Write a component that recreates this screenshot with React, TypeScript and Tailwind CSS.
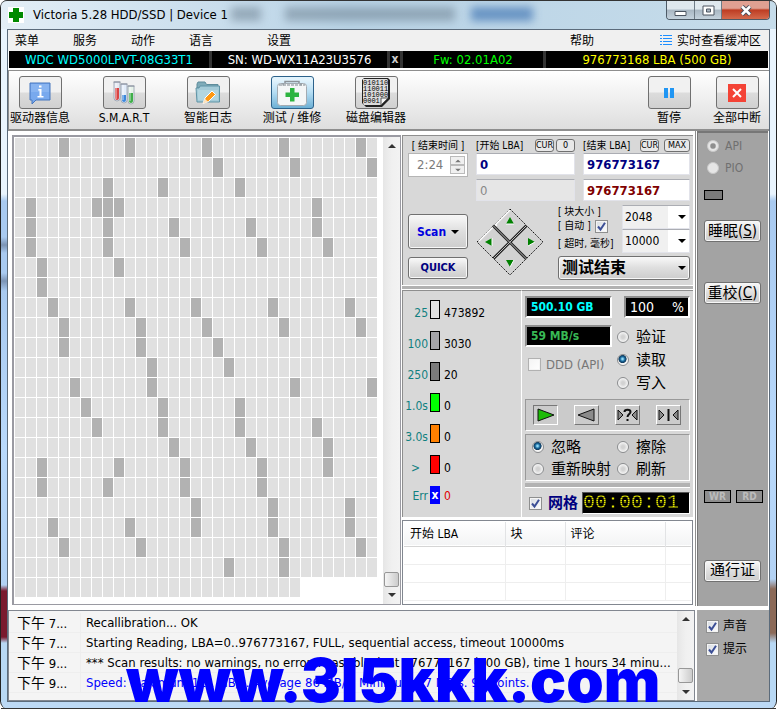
import type { ReactNode } from 'react'

const COLS = 33
const TOTAL_BLOCKS = 22 * COLS + 26

// slow blocks for every row of the surface map
const slowBlocks = [
  [4, 10, 17, 24, 31],
  [18, 25, 32],
  [8, 13, 20],
  [1, 7, 8, 9, 27],
  [1, 8, 14, 21, 27],
  [1, 8, 15, 22, 28],
  [2, 9],
  [2],
  [3, 10, 16, 23, 30],
  [4, 11, 17, 24, 31],
  [4, 11, 18],
  [12, 19],
  [5, 12, 25, 32],
  [6, 13, 20],
  [7, 13, 20, 27],
  [14, 21, 28],
  [2, 9, 15, 22, 28],
  [2, 8, 15, 22],
  [16, 23, 30],
  [3, 10, 16, 23, 30],
  [4, 11, 24, 31],
  [19, 24],
  [],
]

const legend = [
  { label: '25', color: 'bg-[#e0e0e0]', value: '473892' },
  { label: '100', color: 'bg-[#a4a4a8]', value: '3030' },
  { label: '250', color: 'bg-[#7b7b7b]', value: '20' },
  { label: '1.0s', color: 'bg-[#00ff00]', value: '0' },
  { label: '3.0s', color: 'bg-[#ff8000]', value: '0' },
  { label: '>', color: 'bg-[#ff0000]', value: '0' },
]

const logs = [
  { time: '7...', text: 'Recallibration... OK' },
  { time: '7...', text: 'Starting Reading, LBA=0..976773167, FULL, sequential access, timeout 10000ms' },
  { time: '9...', text: '*** Scan results: no warnings, no errors. Last block at 976773167 (500 GB), time 1 hours 34 minu...' },
  { time: '9...', text: 'Speed: Maximum 111 MB/s. Average 86 MB/s. Minimum 37 MB/s. 98 points.', blue: true },
]

const btn =
  'rounded-[3px] border border-[#707070] bg-linear-to-b from-[#f4f4f4] from-10% via-[#dedede] via-50% to-[#cdcdcd] shadow-[inset_0_0_0_1px_#f8f8f8]'

function Check({ label, children, checked = false, disabled = false, className = '' }: {
  label?: string
  children?: ReactNode
  checked?: boolean
  disabled?: boolean
  className?: string
}) {
  return (
    <label className={`flex items-center ${className}`}>
      <span className="relative block size-[13px] shrink-0">
        <input
          type="checkbox"
          aria-label={label}
          defaultChecked={checked}
          disabled={disabled}
          className="peer block size-[13px] appearance-none border border-[#8e8f8f] bg-linear-to-br from-[#d5dae0] to-white shadow-[inset_0_0_0_1px_#f4f4f4] disabled:border-[#b1b1b1] disabled:from-[#f4f4f4]"
        />
        <svg viewBox="0 0 13 13" className="pointer-events-none absolute inset-0 hidden size-[13px] peer-checked:block">
          <path d="M3 6.5 5.5 9.5 10 2.8" fill="none" stroke="#3c4f96" strokeWidth="2" />
        </svg>
      </span>
      {children}
    </label>
  )
}

function Radio({ name, children, checked = false, disabled = false, className = '' }: {
  name: string
  children: ReactNode
  checked?: boolean
  disabled?: boolean
  className?: string
}) {
  return (
    <label className={`flex items-center whitespace-nowrap ${className}`}>
      <input
        type="radio"
        name={name}
        defaultChecked={checked}
        disabled={disabled}
        className="size-[12px] shrink-0 appearance-none rounded-full border border-[#8a8c8e] bg-[radial-gradient(circle,#d2d2d2_20%,#f6f6f6_70%)] checked:bg-[radial-gradient(circle_at_45%_40%,#8fd8f5_8%,#17689c_28%,#123a5c_46%,#f4f4f4_54%)] disabled:border-[#c9c9c9] disabled:bg-none disabled:bg-[#e6e6e6] disabled:checked:bg-[radial-gradient(circle,#8f8f8f_30%,#e6e6e6_50%)]"
      />
      {children}
    </label>
  )
}

function Arrow({ up = false, className = '' }: { up?: boolean; className?: string }) {
  return (
    <svg viewBox="0 0 8 4" className={`h-1 w-2 ${className}`} aria-hidden="true">
      <path d={up ? 'M0 4 4 0 8 4z' : 'M0 0h8L4 4z'} fill="currentColor" />
    </svg>
  )
}

function Scrollbar() {
  return (
    <div className="flex w-[17px] shrink-0 flex-col items-center bg-linear-to-r from-[#e6e6e6] via-[#f0f0f0] to-[#f3f3f3] text-[#333]">
      <div className="flex h-[17px] items-center"><Arrow up /></div>
      <div className="flex-1" />
      <div className="h-[15px] w-[15px] rounded-[2px] border border-[#979797] bg-linear-to-r from-[#f5f5f5] to-[#cccccc]" />
      <div className="flex h-[17px] items-center"><Arrow /></div>
    </div>
  )
}

function ToolButton({ label, active = false, children }: { label: string; active?: boolean; children: ReactNode }) {
  return (
    <div className="flex w-[62px] flex-col items-center">
      <button
        aria-label={label}
        className={`flex h-[33px] w-[43px] items-center justify-center rounded-[3px] border ${
          active
            ? 'border-[#2c628b] bg-linear-to-b from-[#e2f3fc] from-10% via-[#b5ddf3] via-50% to-[#6cb0d5]'
            : 'border-[#707070] bg-linear-to-b from-[#f1f1f1] from-48% via-[#dcdcdc] via-52% to-[#d0d0d0]'
        }`}
      >
        {children}
      </button>
      <span className="mt-px h-4 whitespace-nowrap leading-4">{label}</span>
    </div>
  )
}

function InfoIcon() {
  return (
    <svg width="22" height="24" viewBox="0 0 22 24">
      <path d="M1 2h20v17H7l-4 4v-4H1z" fill="#78a9ee" stroke="#4777bd" />
      <path d="M2 3h18v8H2z" fill="#92bcf4" opacity=".6" />
      <path d="M9.500 8h3v7h2v1.500H8.500V15h2V9.500h-1.500zM10 4.500h2.500v2H10z" fill="#fff" />
    </svg>
  )
}

function TubesIcon() {
  return (
    <svg width="24" height="24" viewBox="0 0 24 24">
      <g stroke="#96a0ad" strokeWidth=".8">
        <path d="M2 1h6v16a3 3 0 0 1-6 0z" fill="#e7eaf3" />
        <path d="M9 3h6v16a3 3 0 0 1-6 0z" fill="#e3edfa" />
        <path d="M16 5h6v15a3 3 0 0 1-6 0z" fill="#e7f2e9" />
      </g>
      <path d="M3 7h4v10a2 2 0 0 1-4 0z" fill="#d94444" />
      <path d="M10 14h4v5a2 2 0 0 1-4 0z" fill="#3b87dc" />
      <path d="M17 12h4v8a2 2 0 0 1-4 0z" fill="#3fae49" />
      <path d="M4 2v16M11 4v15M18 6v14" stroke="#fff" strokeWidth="1" opacity=".7" />
      <path d="M1.500 1h7M8.500 3h7M15.500 5h7" stroke="#868c9b" />
    </svg>
  )
}

function FolderIcon() {
  return (
    <svg width="26" height="26" viewBox="0 0 26 26">
      <path d="M2 4 3 2h7l1.500 2.500H23V8H2z" fill="#7eabb9" stroke="#5e8c9b" />
      <path d="M1 8h3l1-2h19.500v16H2z" fill="#a4cbd8" stroke="#5f93a5" />
      <path d="M3 10h20v10H3z" fill="#b9dae4" opacity=".7" />
      <path d="m10 18 7-7 3.500 3.500-7 7-5.500 2z" fill="#ff9914" stroke="#fff" />
      <path d="m9.800 18.500-1.800 5 5-1.800z" fill="#fbe3c0" />
    </svg>
  )
}

function KitIcon() {
  return (
    <svg width="32" height="26" viewBox="0 0 32 26">
      <path d="M9 4V1.500h14V4" fill="none" stroke="#8c9298" strokeWidth="1.500" />
      <rect x="1.500" y="3.500" width="29" height="22" rx="3" fill="#f4f6f7" stroke="#a3abb2" />
      <path d="M3 5h26M7 3.500v2M25 3.500v2" stroke="#7d868d" strokeDasharray="3 1" />
      <path d="M14 8h4.500v4.500H23V17h-4.500v4.500H14V17H9.500v-4.500H14z" fill="#2db441" />
    </svg>
  )
}

function BinaryIcon() {
  return (
    <svg width="30" height="31" viewBox="0 0 30 31">
      <path d="M3 1h24l2 2v19l-8 8H5l-4-4V3z" fill="#222" />
      <path d="M2 2h24l1 1v18l-7 7H3l-1-2z" fill="#dcdcdc" />
      <path d="M27 21h-7v7z" fill="#f6f6f6" stroke="#555" />
      <g fontFamily="'Liberation Mono', monospace" fontSize="7" fill="#000">
        <text x="2" y="8">010110</text>
        <text x="2" y="14">110011</text>
        <text x="2" y="20">101000</text>
        <text x="2" y="26">0001</text>
      </g>
    </svg>
  )
}

function Diamond() {
  return (
    <svg width="68" height="68" viewBox="0 0 68 68" role="img" aria-label="方向">
      <path d="M34 1 67 34 34 67 1 34z" fill="#d2d2d2" stroke="#111" strokeDasharray="1.500 1" />
      <path d="M3 33 34 2M19 48l31-31M19 18l2-1M34 36l16 15" stroke="#fff" strokeWidth="1.500" fill="none" />
      <path d="M17 17.500 50.500 51M17.500 50.500l33-33" stroke="#222" strokeWidth="3" />
      <path d="M17 17.500 50.500 51M17.500 50.500l33-33" stroke="#bbb" strokeWidth="1" />
      <path d="M34 9l4 7h-8zM34 59l4-7h-8zM9 34l7-4v8zM59 34l-7-4v8z" fill="#008000" />
      <path d="M38 16h-8M38 52l-4 7M16 30v8M59 34l-7 4" stroke="#fff" strokeWidth="1" />
    </svg>
  )
}

function MediaButton({ label, pressed = false, children }: { label: string; pressed?: boolean; children: ReactNode }) {
  return (
    <button
      aria-label={label}
      className={`flex h-[20px] w-[25px] items-center justify-center border bg-[#cbcbcb] ${
        pressed ? 'border-t-[#777] border-l-[#777] border-r-white border-b-white' : 'border-t-white border-l-white border-r-[#777] border-b-[#777]'
      }`}
    >
      <svg width="21" height="16" viewBox="0 0 21 16">{children}</svg>
    </button>
  )
}

const small = 'flex h-[13px] items-center justify-center rounded-[3px] border border-[#707070] bg-[#e8e8e8] text-[9px] leading-none'
const field = 'block h-[22px] w-full border border-[#e2e3ea] border-t-[#abadb3] bg-white px-[3px] text-[13px] font-bold'
const lcd = 'flex h-[22px] items-center border-2 border-t-[#8e8e8e] border-l-[#8e8e8e] border-r-white border-b-white bg-black'

function TitleBar() {
  return (
    <header className="relative flex h-[29px] shrink-0 items-start overflow-hidden rounded-t-md border-t border-[#333] bg-linear-to-r from-[#e3eef6] via-[#b9d3e6] via-45% to-[#c6dcea] pl-[7px] pr-[6px]">
      <div className="absolute top-[6px] left-[230px] h-[14px] w-[30px] bg-[#66798a]/50 blur-[4px]" />
      <div className="absolute top-[6px] left-[284px] h-[14px] w-[170px] bg-[#66798a]/50 blur-[4px]" />
      <div className="absolute top-[6px] left-[470px] h-[14px] w-[62px] bg-[#2f67ab]/60 blur-[4px]" />
      <svg width="16" height="16" viewBox="0 0 16 16" className="relative mt-[6px]">
        <path d="M0 0h16v16H0z" fill="#fff" />
        <path d="M5 1h6v4h4v6h-4v4H5v-4H1V5h4z" fill="#008a00" />
      </svg>
      <h1 className="relative ml-[9px] flex-1 text-[13px] leading-[28px]">Victoria 5.28 HDD/SSD | Device 1</h1>
      <div className="relative flex h-[19px] overflow-hidden rounded-b-[4px] border border-t-0 border-[#4d5a66]">
        <button aria-label="最小化" className="flex w-[28px] items-center justify-center border-r border-[#6e7b86] bg-linear-to-b from-[#dfe8ee] from-45% via-[#a9b7c3] via-50% to-[#c4d2dd]">
          <svg width="13" height="13" viewBox="0 0 13 13"><path d="M1 7.500h11v4H1z" fill="#fff" stroke="#4c5561" /></svg>
        </button>
        <button aria-label="最大化" className="flex w-[27px] items-center justify-center border-r border-[#6e7b86] bg-linear-to-b from-[#dfe8ee] from-45% via-[#a9b7c3] via-50% to-[#c4d2dd]">
          <svg width="13" height="11" viewBox="0 0 13 11">
            <path d="M1 1h11v9H1z" fill="#fff" stroke="#4c5561" />
            <path d="M4.500 4h4v3h-4z" fill="#aab6c2" stroke="#4c5561" />
          </svg>
        </button>
        <button aria-label="关闭" className="flex w-[47px] items-center justify-center bg-linear-to-b from-[#e0a092] from-40% via-[#bd3c22] via-50% to-[#d4694b]">
          <svg width="12" height="11" viewBox="0 0 12 11">
            <path d="m2 1.500 8 8M10 1.500l-8 8" stroke="#444c5a" strokeWidth="4.500" />
            <path d="m2 1.500 8 8M10 1.500l-8 8" stroke="#fff" strokeWidth="2.500" />
          </svg>
        </button>
      </div>
    </header>
  )
}

function MenuBar() {
  return (
    <nav className="flex h-[21px] items-center bg-[#f0f0f0] pr-[8px] pl-[7px]">
      <button className="w-[58px] text-left">菜单</button>
      <button className="w-[58px] text-left">服务</button>
      <button className="w-[58px] text-left">动作</button>
      <button className="w-[78px] text-left">语言</button>
      <button className="text-left">设置</button>
      <div className="flex-1" />
      <button className="mr-[66px]">帮助</button>
      <button className="flex items-center gap-[5px]">
        <svg width="12" height="13" viewBox="0 0 12 13">
          <path d="M0 1.500h2M3 1.500h9M0 4.500h2M3 4.500h9M0 7.500h2M3 7.500h9M0 10.500h2M3 10.500h9" stroke="#1e8fff" />
        </svg>
        实时查看缓冲区
      </button>
    </nav>
  )
}

function DriveInfo() {
  return (
    <div className="mx-px flex h-[17px] gap-[3px] bg-[#333] text-center text-[13px] leading-[17px]">
      <div className="w-[200px] bg-black text-[#00ffff]">WDC WD5000LPVT-08G33T1</div>
      <div className="w-[175px] bg-black text-white">SN: WD-WX11A23U3576</div>
      <button aria-label="关闭" className="w-[10px] bg-black text-[12px] font-bold text-[#ccc]">x</button>
      <div className="w-[140px] bg-black text-[#00ff00]">Fw: 02.01A02</div>
      <div className="flex-1 bg-black text-[#ffff00]">976773168 LBA (500 GB)</div>
    </div>
  )
}

function Toolbar() {
  return (
    <div className="mt-[2px] flex h-[59px] gap-[22px] border-t border-l border-[#8e8e8e] bg-linear-to-b from-white to-[#dedede] pt-[5px] pr-px">
      <ToolButton label="驱动器信息"><InfoIcon /></ToolButton>
      <ToolButton label="S.M.A.R.T"><TubesIcon /></ToolButton>
      <ToolButton label="智能日志"><FolderIcon /></ToolButton>
      <ToolButton label="测试 / 维修" active><KitIcon /></ToolButton>
      <ToolButton label="磁盘编辑器"><BinaryIcon /></ToolButton>
      <div className="flex flex-1 justify-end gap-[6px]">
        <ToolButton label="暂停">
          <svg width="10" height="10" viewBox="0 0 10 10"><path d="M0 0h4v10H0zM6 0h4v10H6z" fill="#2196f3" /></svg>
        </ToolButton>
        <ToolButton label="全部中断">
          <svg width="18" height="18" viewBox="0 0 18 18">
            <path d="M0 0h18v18H0z" fill="#f44336" />
            <path d="m5 5 8 8M13 5l-8 8" stroke="#fff" strokeWidth="2" />
          </svg>
        </ToolButton>
      </div>
    </div>
  )
}

function SurfaceMap() {
  return (
    <section className="flex min-w-0 flex-1 border border-[#9a9aa2] border-t-2 border-l-2 bg-white">
      <div className="min-w-0 flex-1 pt-px pl-px">
        <div className="grid grid-cols-[repeat(33,10px)] gap-px">
          {Array.from({ length: TOTAL_BLOCKS }, (_, i) => (
            <div
              key={i}
              className={`h-[19px] ${slowBlocks[Math.floor(i / COLS)].includes(i % COLS) ? 'bg-[#b2b2b2]' : 'bg-[#e0e0e0]'}`}
            />
          ))}
        </div>
      </div>
      <Scrollbar />
    </section>
  )
}

function ScanSettings() {
  return (
    <section className="border-t border-l border-[#8e8e8e] bg-[#d8d8d8] pt-[2px] pr-[3px] pb-[5px] pl-[5px]">
      <div className="flex gap-[8px]">
        <div className="w-[60px]">
          <label htmlFor="time" className="block h-[15px] text-center text-[10px] leading-[15px]">[ 结束时间 ]</label>
          <div className="flex h-[24px] items-center border border-[#b5b5b5] bg-white pr-[2px]">
            <input id="time" disabled defaultValue="2:24" className="min-w-0 flex-1 pl-[8px] text-[13px] text-[#7b7b7b]" />
            <div className="flex flex-col text-[#777]">
              <button aria-label="增加" className="flex h-[9px] w-[15px] items-center justify-center border border-[#bbb] bg-[#f0f0f0]"><Arrow up className="scale-75" /></button>
              <button aria-label="减少" className="flex h-[9px] w-[15px] items-center justify-center border border-[#bbb] bg-[#f0f0f0]"><Arrow className="scale-75" /></button>
            </div>
          </div>
        </div>
        <div className="flex w-[99px] flex-col">
          <div className="flex h-[15px] items-center justify-between text-[10px]">
            <label htmlFor="start" className="w-[57px] whitespace-nowrap">[开始 LBA]</label>
            <button className={`${small} w-[19px]`}>CUR</button>
            <button className={`${small} w-[19px]`}>0</button>
          </div>
          <input id="start" defaultValue="0" className={`${field} text-[#000080]`} />
          <input aria-label="当前 LBA" disabled defaultValue="0" className="mt-[4px] block h-[22px] w-full border border-[#e2e3ea] border-t-[#abadb3] bg-[#e6e6e6] px-[3px] text-[13px] text-[#888]" />
        </div>
        <div className="flex min-w-0 flex-1 flex-col">
          <div className="flex h-[15px] items-center gap-[5px] text-[10px]">
            <label htmlFor="end" className="flex-1 whitespace-nowrap">[结束 LBA]</label>
            <button className={`${small} w-[19px]`}>CUR</button>
            <button className={`${small} w-[26px]`}>MAX</button>
          </div>
          <input id="end" defaultValue="976773167" className={`${field} text-[#000080]`} />
          <input aria-label="最后 LBA" defaultValue="976773167" className={`${field} mt-[4px] text-[#800000]`} />
        </div>
      </div>
      <div className="mt-[4px] flex gap-[8px]">
        <div className="flex w-[60px] flex-col gap-[8px] pt-[9px]">
          <button className={`${btn} flex h-[35px] items-center justify-center gap-[5px] font-bold text-[#0000e0]`}>
            Scan <Arrow className="text-black" />
          </button>
          <button className={`${btn} h-[22px] text-[11px] font-bold text-[#000080]`}>QUICK</button>
        </div>
        <div className="pt-[3px]"><Diamond /></div>
        <div className="ml-[6px] min-w-0 flex-1">
          <div className="flex">
            <div className="w-[64px] text-[10px]">
              <label htmlFor="size" className="block h-[14px] whitespace-nowrap leading-[14px]">[ 块大小 ]</label>
              <div className="flex h-[14px] items-center gap-[4px] whitespace-nowrap">
                <span>[ 自动 ]</span>
                <Check label="自动" checked />
              </div>
              <label htmlFor="timeout" className="block h-[20px] whitespace-nowrap leading-[22px]">[ 超时, 毫秒]</label>
            </div>
            <div className="min-w-0 flex-1">
              <Combo id="size" value="2048" />
              <Combo id="timeout" value="10000" />
            </div>
          </div>
          <div className="relative mt-[3px]">
            <select aria-label="测试结束" className={`${btn} block h-[24px] w-full appearance-none pl-[3px] text-[16px] leading-[20px] font-bold`}>
              <option>测试结束</option>
            </select>
            <Arrow className="pointer-events-none absolute top-[10px] right-[4px]" />
          </div>
        </div>
      </div>
    </section>
  )
}

function Combo({ id, value }: { id: string; value: string }) {
  return (
    <div className="relative">
      <select id={id} className="block h-[24px] w-full appearance-none border border-[#e2e3ea] border-t-[#abadb3] bg-linear-to-r from-[#f0f0f0] from-68% to-white to-68% pl-[2px] text-[12px]">
        <option>{value}</option>
      </select>
      <Arrow className="pointer-events-none absolute top-[10px] right-[4px]" />
    </div>
  )
}

function Legend() {
  return (
    <section className="flex w-[120px] flex-col gap-[12px] border-t border-r border-l border-[#8e8e8e] border-r-white bg-[#d8d8d8] pt-[9px]">
      {legend.map((item) => (
        <div key={item.label} className="flex h-[19px] gap-[2px] text-[12px] leading-[27px]">
          <span className={`w-[25px] text-right text-[#108080] ${item.label === '>' ? 'pr-2' : ''}`}>{item.label}</span>
          <span className={`w-[10px] border border-black ${item.color}`} />
          <span className="pl-[2px]">{item.value}</span>
        </div>
      ))}
      <div className="flex h-[19px] gap-[2px] text-[12px] leading-[21px]">
        <span className="w-[25px] text-right text-[#108080]">Err</span>
        <span className="flex h-[18px] w-[10px] items-center justify-center bg-[#0000ff] font-bold text-white">x</span>
        <span className="pl-[2px] text-[#e00000]">0</span>
      </div>
    </section>
  )
}

function ScanControls() {
  return (
    <section className="min-w-0 flex-1 border-t border-[#8e8e8e] bg-[#d8d8d8] pt-[5px] pr-[3px] pl-[3px]">
      <div className="flex justify-between">
        <div className={`${lcd} w-[87px] pl-[4px] font-bold text-[#00ffff]`}>500.10 GB</div>
        <div className={`${lcd} w-[66px] justify-between px-[4px] text-[14px] text-white`}><span>100</span><span>%</span></div>
      </div>
      <div className="mt-[7px] flex">
        <div className="w-[92px]">
          <div className={`${lcd} w-[87px] pl-[4px] font-bold text-[#38b955]`}>59 MB/s</div>
          <Check disabled className="mt-[10px] ml-[3px] h-[15px] gap-[5px] text-[13px] whitespace-nowrap text-[#777]">DDD (API)</Check>
        </div>
        <div className="text-[15px]">
          <Radio name="mode" className="h-[23px] gap-[7px]">验证</Radio>
          <Radio name="mode" checked className="h-[23px] gap-[7px]">读取</Radio>
          <Radio name="mode" className="h-[23px] gap-[7px]">写入</Radio>
        </div>
      </div>
      <div className="mt-[5px] flex h-[32px] items-center gap-[16px] border border-[#999] border-r-white border-b-white bg-[#cbcbcb] pl-[7px]">
        <MediaButton label="向前" pressed><path d="m3 2 16 6-16 6z" fill="#1ebb08" stroke="#111" /></MediaButton>
        <MediaButton label="向后"><path d="M18 2 2 8l16 6z" fill="#8b8b8b" stroke="#111" /></MediaButton>
        <MediaButton label="随机">
          <path d="m1 3 5 5-5 5zM20 3l-5 5 5 5z" fill="#8b8b8b" stroke="#111" />
          <path d="M7.500 5c0-3 6-3 6 0 0 2-3 2-3 5M10.500 12v2" fill="none" stroke="#111" strokeWidth="2" />
        </MediaButton>
        <MediaButton label="蝶形">
          <path d="m1 3 5 5-5 5zM20 3l-5 5 5 5z" fill="#8b8b8b" stroke="#111" />
          <path d="M10.500 2v12" stroke="#111" strokeWidth="2" />
        </MediaButton>
      </div>
      <div className="mt-[3px] grid h-[47px] grid-cols-[85px_1fr] content-center border border-[#999] border-r-white border-b-white bg-[#cbcbcb] pl-[6px] text-[15px]">
        <Radio name="action" checked className="h-[22px] gap-[7px]">忽略</Radio>
        <Radio name="action" className="h-[22px] gap-[7px]">擦除</Radio>
        <Radio name="action" className="h-[22px] gap-[7px]">重新映射</Radio>
        <Radio name="action" className="h-[22px] gap-[7px]">刷新</Radio>
      </div>
      <div className="mt-[2px] h-[5px] border-b border-white bg-[#b2b2b2]" />
      <div className="mt-[4px] flex items-center">
        <Check checked className="flex-1 gap-[6px] pl-[4px] text-[15px] leading-[22px] font-bold whitespace-nowrap text-[#000080]">网格</Check>
        <div className="flex h-[22px] w-[108px] items-center border border-[#555] border-r-white border-b-white bg-black bg-[radial-gradient(#0d400d_35%,#000_40%)] bg-size-[2px_2px] font-['Liberation_Mono',monospace] text-[20px] leading-[20px]">
          <span className="bg-[repeating-linear-gradient(0deg,#e8e800_0_1px,#6f7400_1px_2px)] bg-clip-text text-transparent">00:00:01</span>
        </div>
      </div>
    </section>
  )
}

function DefectTable() {
  return (
    <section className="mt-[3px] flex-1 border border-[#828790] bg-white px-px pt-px pb-[3px]">
      <table className="w-full table-fixed text-left">
        <thead>
          <tr className="h-[24px] border-b border-[#d5d5d5] bg-linear-to-b from-white to-[#f3f4f5]">
            <th className="w-[101px] border-r border-[#e2e3e5] pl-[6px] font-normal">开始 LBA</th>
            <th className="w-[60px] border-r border-[#e2e3e5] pl-[5px] font-normal">块</th>
            <th className="w-[100px] border-r border-[#e2e3e5] pl-[5px] font-normal">评论</th>
            <th />
          </tr>
        </thead>
        <tbody>
          {[0, 1, 2].map((row) => (
            <tr key={row} className="h-[18px] border-b border-[#eee]">
              <td className="border-r border-[#eee]" />
              <td className="border-r border-[#eee]" />
              <td className="border-r border-[#eee]" />
              <td />
            </tr>
          ))}
        </tbody>
      </table>
    </section>
  )
}

function SidePanel() {
  return (
    <aside className="flex w-[71px] shrink-0 flex-col border-t-2 border-l border-[#777] bg-[#a3a3a3] pl-[6px]">
      <Radio name="access" checked disabled className="mt-[2px] ml-[3px] h-[22px] gap-[6px] text-[#707070]">API</Radio>
      <Radio name="access" disabled className="ml-[3px] h-[22px] gap-[6px] text-[#707070]">PIO</Radio>
      <div className="mt-[11px] h-[10px] w-[19px] border border-black bg-[#7b7b7b]" />
      <button className={`${btn} mt-[20px] h-[22px] w-[57px] text-[15px] leading-none whitespace-nowrap`}>睡眠(<u>S</u>)</button>
      <button className={`${btn} mt-[40px] h-[22px] w-[57px] text-[15px] leading-none whitespace-nowrap`}>重校(<u>C</u>)</button>
      <div className="flex-1" />
      <div className="flex gap-[5px] text-center text-[10px] leading-[11px] font-bold text-[#bcbcbc]">
        <span className="w-[27px] border border-black bg-[#8e8e8e]">WR</span>
        <span className="w-[27px] border border-black bg-[#8e8e8e]">RD</span>
      </div>
      <button className={`${btn} mt-[57px] mb-[24px] h-[22px] w-[57px] text-[15px] leading-none`}>通行证</button>
    </aside>
  )
}

function LogPanel() {
  return (
    <div className="mt-[4px] flex flex-1">
      <section className="flex min-w-0 flex-1 border border-[#828790] bg-[#f4f4f4]">
        <div className="min-w-0 flex-1 pt-[2px] text-[13px]">
          {logs.map((row, i) => (
            <div key={i} className="flex h-[20px] border-b border-[#eee] leading-[20px] whitespace-nowrap">
              <span className="w-[72px] shrink-0 border-r border-[#eee] pl-[8px]"><span className="text-[14px]">下午</span> {row.time}</span>
              <span className={`pl-[5px] ${row.blue ? 'text-[#0000ff]' : ''}`}>{row.text}</span>
            </div>
          ))}
        </div>
        <Scrollbar />
      </section>
      <aside className="ml-[2px] w-[72px] shrink-0 bg-[#a9a9a9] pt-[5px] pl-[9px]">
        <Check checked className="h-[23px] gap-[4px]">声音</Check>
        <Check checked className="h-[23px] gap-[4px]">提示</Check>
      </aside>
    </div>
  )
}

export default function App() {
  return (
    <div className="relative flex min-h-screen flex-col rounded-lg border-x border-[#222] bg-[#bcd9f5] font-['DejaVu_Sans_Condensed','Noto_Sans_CJK_SC',sans-serif] text-[12px] leading-[16px] text-black">
      <TitleBar />
      <div className="flex flex-1">
        <div className="w-[6px] bg-[linear-gradient(#e9f4fd_0_165px,#a9caf0_172px_208px,#7c94b5_216px,#a9caf0_224px_244px,#7c94b5_252px,#a9caf0_262px,#b9d9fb_420px,#b3d2f4_556px,#7a1a2e_562px_608px,#b8d8f4_614px)]" />
        <main className="flex min-w-0 flex-1 flex-col border border-[#5b6b7b] bg-white">
          <MenuBar />
          <DriveInfo />
          <Toolbar />
          <div className="flex border-t-2 border-[#8e8e8e] pr-px">
            <div className="mt-[4px] ml-[4px] flex min-w-0 flex-1 pb-px">
              <SurfaceMap />
              <div className="ml-px flex w-[291px] shrink-0 flex-col">
                <ScanSettings />
                <div className="my-px h-[3px] bg-[#b2b2b2]" />
                <div className="flex h-[227px]">
                  <Legend />
                  <ScanControls />
                </div>
                <DefectTable />
              </div>
            </div>
            <div className="ml-[2px] w-px bg-[#8e8e8e]" />
            <div className="ml-px flex"><SidePanel /></div>
          </div>
          <LogPanel />
        </main>
        <div className="w-[6px] bg-[linear-gradient(#e9f4fd_0_165px,#a9caf0_172px,#b9d9fb_420px,#b3d2f4_550px,#8c6a58_560px_604px,#b8d8f4_614px)]" />
      </div>
      <div className="h-[7px] shrink-0 border-b border-[#333]" />
      <div className="pointer-events-none absolute bottom-[3px] left-[125px] font-['Inter',sans-serif] text-[60px] leading-[52px] font-black whitespace-nowrap text-[#0000ff]">
        www.3l5kkk.com
      </div>
    </div>
  )
}
